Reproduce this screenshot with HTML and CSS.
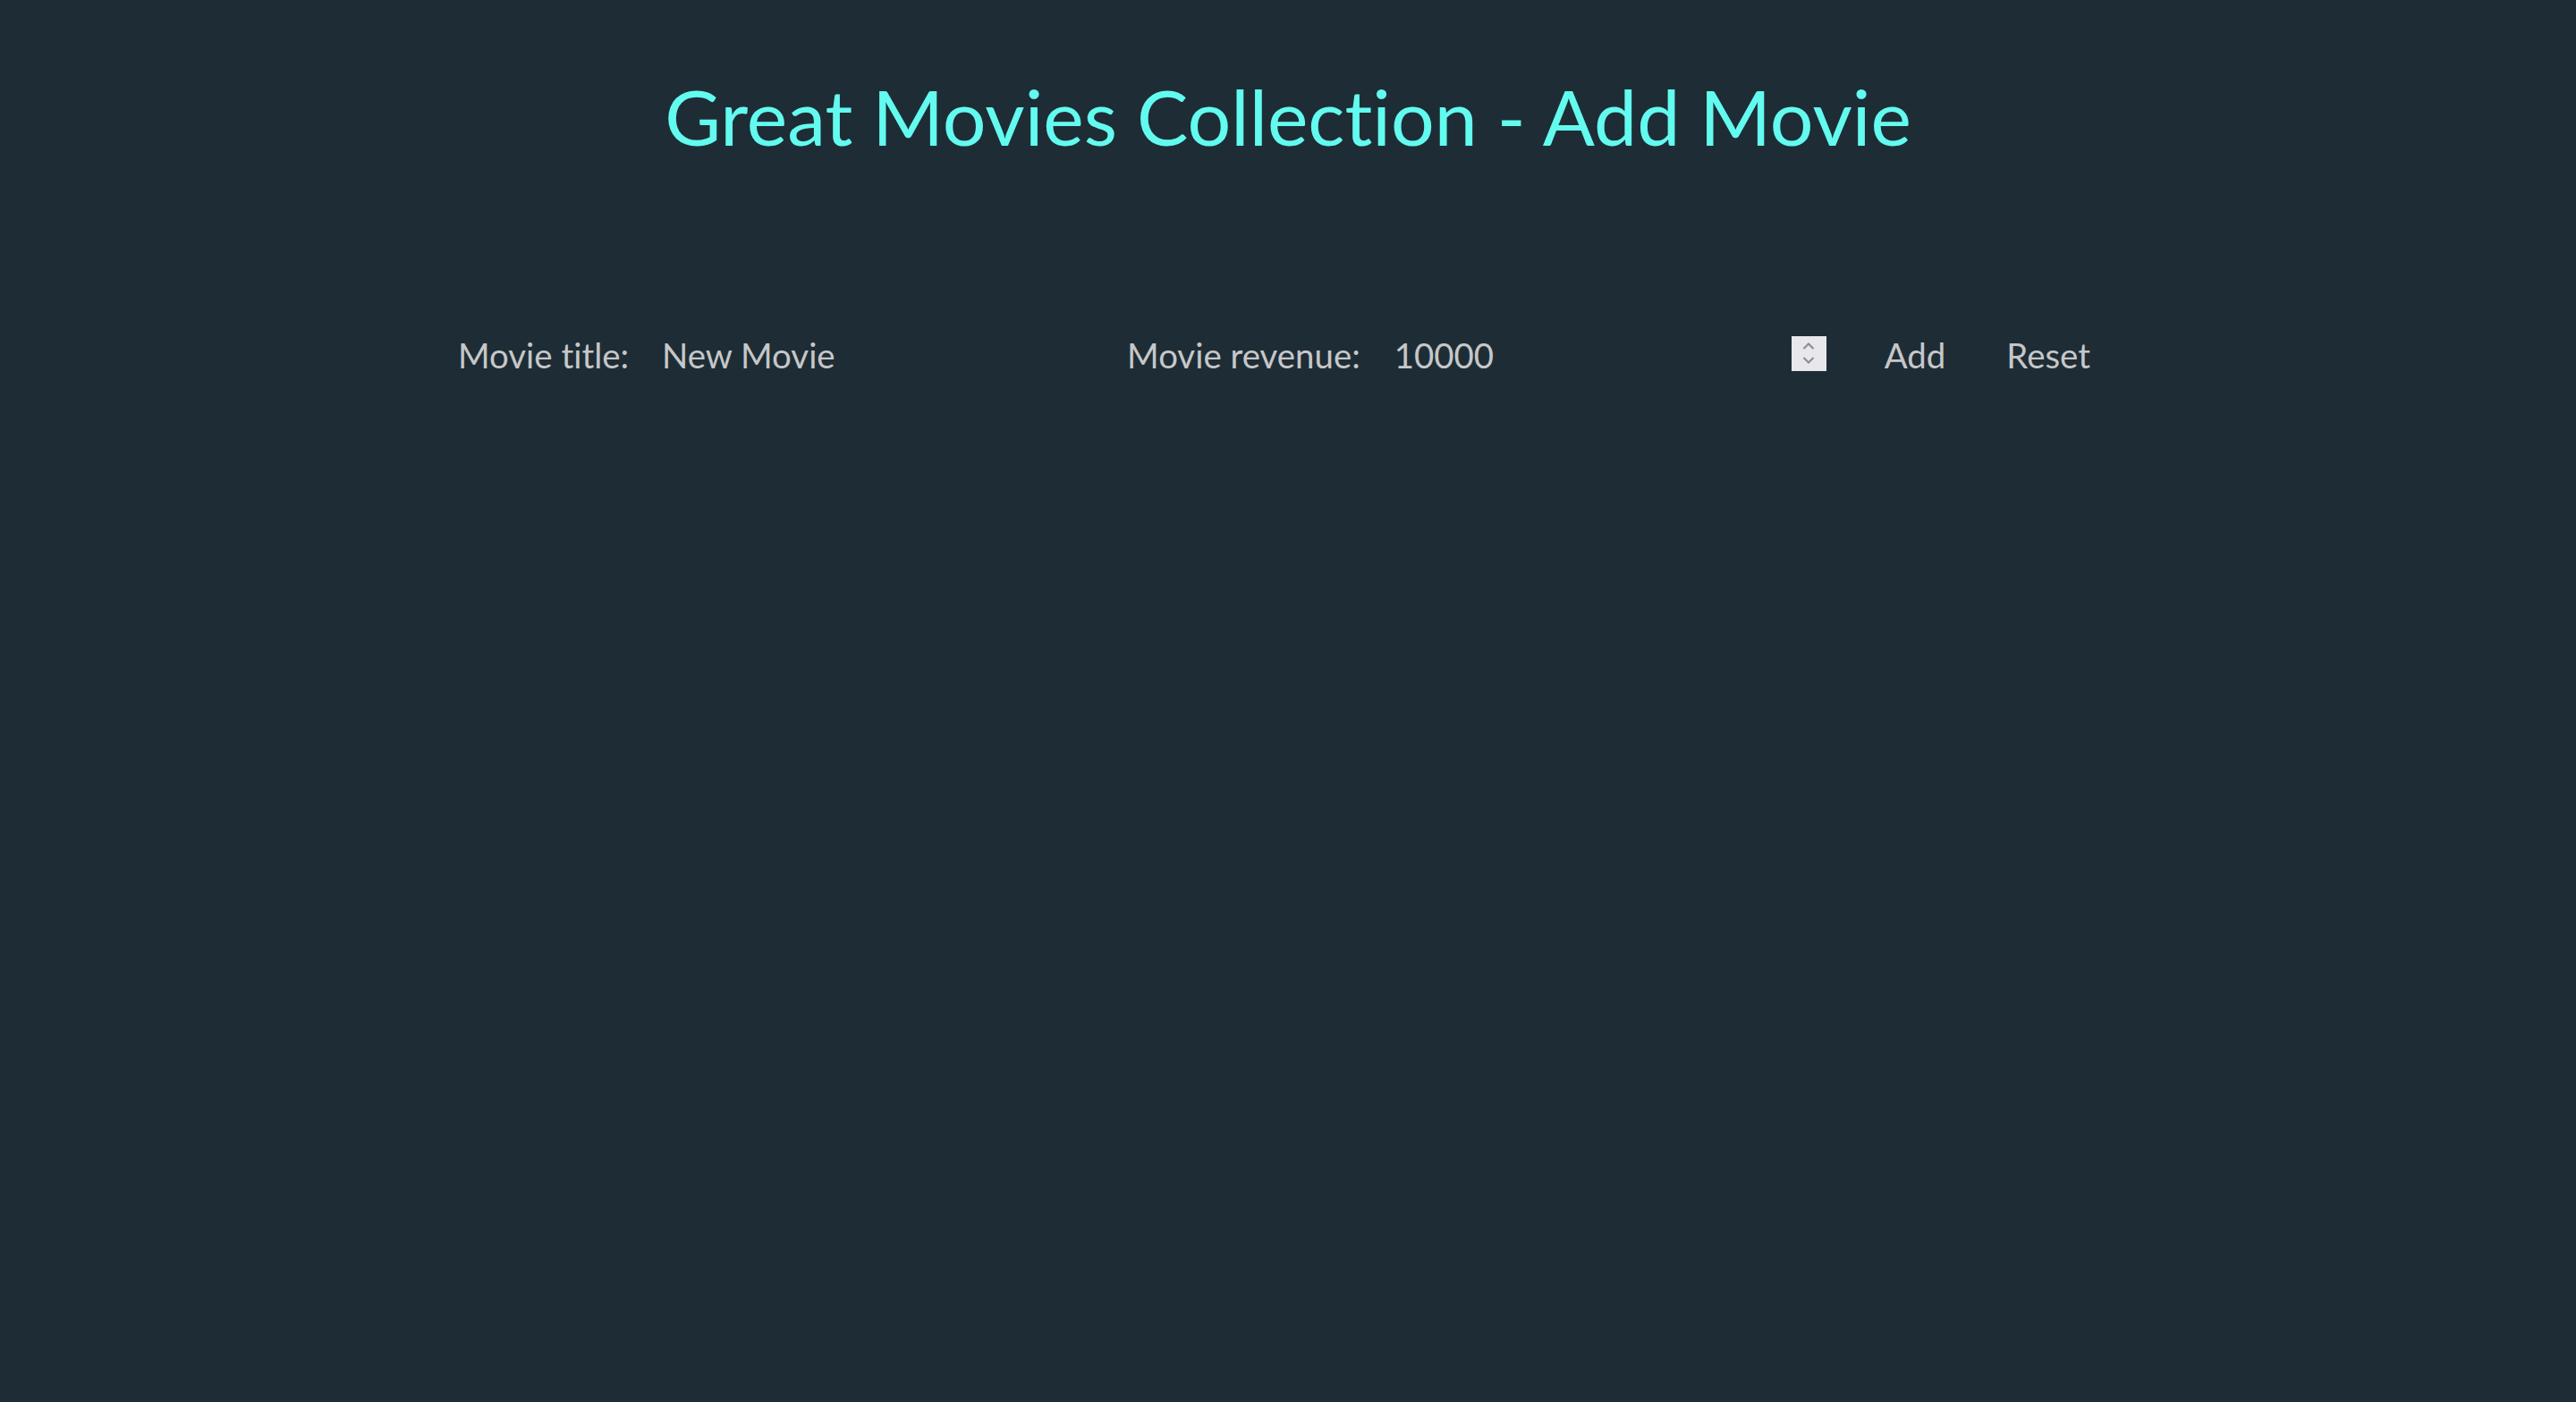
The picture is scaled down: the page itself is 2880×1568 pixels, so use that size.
FILE: index.html
```html
<!DOCTYPE html>
<html lang="en">
<head>
<meta charset="utf-8">
<title>Great Movies Collection - Add Movie</title>
<link rel="stylesheet" href="styles.css">
</head>
<body>
<main class="page">
  <h1 class="title">Great Movies Collection - Add Movie</h1>
  <form class="movie-form">
    <label class="field-label" for="title">Movie title:</label>
    <input class="field-input" id="title" type="text" value="New Movie">
    <label class="field-label field-label--gap" for="revenue">Movie revenue:</label>
    <span class="number-wrap">
      <input class="field-input field-input--number" id="revenue" type="number" value="10000">
      <span class="spinner" aria-hidden="true">
        <svg width="14" height="28" viewBox="0 0 14 28"><path d="M1.5 9 L7 3.5 L12.5 9" fill="none" stroke="#8f8d99" stroke-width="2.2"/><path d="M1.5 19 L7 24.5 L12.5 19" fill="none" stroke="#8f8d99" stroke-width="2.2"/></svg>
      </span>
    </span>
    <button class="btn btn--add" type="button">Add</button>
    <button class="btn btn--reset" type="reset">Reset</button>
  </form>
</main>
</body>
</html>
```

FILE: styles.css
```css
html, body {
  margin: 0;
  padding: 0;
  height: 100%;
}
body {
  background: #1e2d35;
  font-family: Lato, "Open Sans", sans-serif;
  font-variant-ligatures: none;
  color: #c6c7c9;
}
.page {
  padding-top: 78px;
}
.title {
  margin: 0;
  font-weight: 400;
  font-size: 86px;
  line-height: 1.2;
  color: #63fbf0;
  text-align: center;
  font-variant-ligatures: none;
}
.movie-form {
  width: 1856px;
  margin: 193px auto 0;
  display: flex;
  align-items: center;
  font-size: 38.4px;
}
.field-label {
  color: #c6c7c9;
  white-space: nowrap;
}
.field-label--gap {
  margin-left: 38px;
}
.field-input {
  margin-left: 37px;
  width: 482px;
  padding: 0;
  border: 0;
  background: transparent;
  color: #c6c7c9;
  font: inherit;
  font-variant-ligatures: none;
  outline: none;
}
.number-wrap {
  margin-left: 38px;
  width: 483px;
  display: flex;
  align-items: center;
}
.field-input--number {
  margin-left: 0;
  flex: 1 1 auto;
  min-width: 0;
  width: auto;
  -moz-appearance: textfield;
}
.field-input--number::-webkit-inner-spin-button,
.field-input--number::-webkit-outer-spin-button {
  -webkit-appearance: none;
  margin: 0;
}
.spinner {
  flex: 0 0 39px;
  width: 39px;
  height: 39px;
  margin-bottom: 4px;
  background: #e8e7ec;
  display: flex;
  align-items: center;
  justify-content: center;
}
.btn {
  font: inherit;
  color: #c6c7c9;
  background: transparent;
  border: 0;
  padding: 0 5px;
  cursor: pointer;
}
.btn--add {
  margin-left: 60px;
}
.btn--reset {
  margin-left: 58px;
}
```
